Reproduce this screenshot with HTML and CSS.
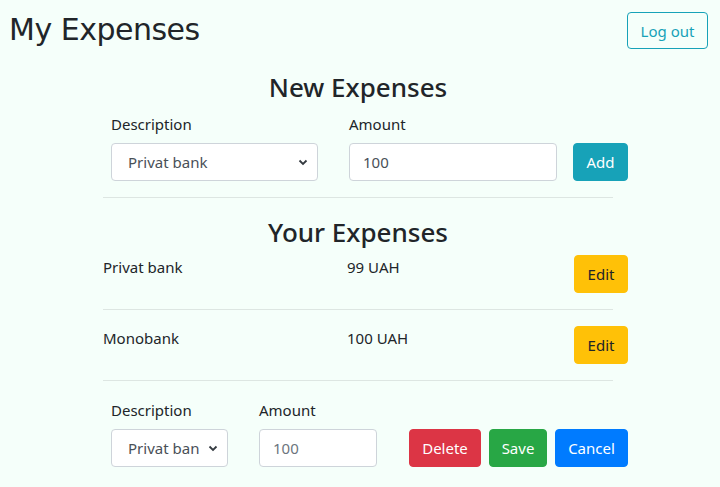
FILE: index.html
```html
<!DOCTYPE html>
<html>
<head>
<meta charset="utf-8">
<link rel="stylesheet" href="styles.css">
</head>
<body>
<header class="topbar">
  <h1 class="brand">My Expenses</h1>
  <button class="btn btn-outline-info">Log out</button>
</header>
<main class="content">
  <h3 class="section-title">New Expenses</h3>
  <form class="form-row new-form">
    <div class="field field-desc">
      <label>Description</label>
      <div class="select"><span>Privat bank</span><svg width="10" height="8" viewBox="0 0 10 8"><path d="M1.5 2.5 L5 6 L8.5 2.5" fill="none" stroke="#343a40" stroke-width="1.8"/></svg></div>
    </div>
    <div class="field field-amount">
      <label>Amount</label>
      <div class="input">100</div>
    </div>
    <button type="button" class="btn btn-info">Add</button>
  </form>
  <hr class="divider">
  <h3 class="section-title second">Your Expenses</h3>
  <div class="expense">
    <span class="exp-name">Privat bank</span>
    <span class="exp-amount">99 UAH</span>
    <button class="btn btn-warning">Edit</button>
  </div>
  <hr class="divider">
  <div class="expense">
    <span class="exp-name">Monobank</span>
    <span class="exp-amount">100 UAH</span>
    <button class="btn btn-warning">Edit</button>
  </div>
  <hr class="divider">
  <form class="form-row edit-form">
    <div class="field field-desc-sm">
      <label>Description</label>
      <div class="select"><span>Privat ban</span><svg width="10" height="8" viewBox="0 0 10 8"><path d="M1.5 2.5 L5 6 L8.5 2.5" fill="none" stroke="#343a40" stroke-width="1.8"/></svg></div>
    </div>
    <div class="field field-amount-sm">
      <label>Amount</label>
      <div class="input muted">100</div>
    </div>
    <div class="actions">
      <button type="button" class="btn btn-danger">Delete</button>
      <button type="button" class="btn btn-success">Save</button>
      <button type="button" class="btn btn-primary">Cancel</button>
    </div>
  </form>
</main>
</body>
</html>
```
FILE: styles.css
```css
* { box-sizing: border-box; }
html, body { margin: 0; padding: 0; }
body {
  background: #f5fffa;
  color: #212529;
  font-family: "Noto Sans", "Open Sans", sans-serif;
  font-size: 15px;
  line-height: 24px;
  width: 720px;
  height: 487px;
  overflow: hidden;
}
.topbar {
  display: flex;
  justify-content: space-between;
  align-items: flex-start;
  padding: 12px 12px 0 9px;
  height: 70px;
}
.brand {
  margin: 0;
  font-family: "Comic Sans MS", "DejaVu Sans", sans-serif;
  font-weight: 400;
  font-size: 30px;
  line-height: 36px;
  color: #212529;
  letter-spacing: -0.5px;
}
.btn {
  font-family: inherit;
  font-size: 15px;
  line-height: 24px;
  height: 38px;
  padding: 6px 12px;
  border-radius: 4px;
  border: 1px solid transparent;
  color: #fff;
  cursor: pointer;
}
.btn-outline-info { background: transparent; border-color: #17a2b8; color: #17a2b8; width: 81px; height: 37px; }
.btn-info { background: #17a2b8; border-color: #17a2b8; }
.btn-warning { background: #ffc107; border-color: #ffc107; color: #212529; }
.btn-danger { background: #dc3545; border-color: #dc3545; }
.btn-success { background: #28a745; border-color: #28a745; }
.btn-primary { background: #007bff; border-color: #007bff; }
.content {
  margin-left: 103px;
  width: 510px;
}
.section-title {
  margin: 0;
  text-align: center;
  font-size: 26px;
  font-weight: 500;
  line-height: 34px;
  color: #212529;
}
.form-row {
  display: flex;
  align-items: flex-end;
  width: 525px;
  padding-left: 8px;
}
.new-form { margin-top: 8px; }
.field { display: flex; flex-direction: column; }
.field label { line-height: 24px; margin-bottom: 7px; }
.field-desc { width: 207px; margin-right: 31px; }
.field-amount { width: 208px; margin-right: 16px; }
.new-form .btn { width: 55px; padding: 0; }
.select, .input {
  height: 38px;
  background: #fff;
  border: 1px solid #ced4da;
  border-radius: 4px;
  display: flex;
  align-items: center;
  color: #495057;
}
.select { justify-content: space-between; padding: 0 9px 0 16px; }
.input { padding: 0 13px; }
.input.muted { color: #6c757d; padding: 0 13px; }
.divider {
  border: 0;
  border-top: 1px solid #dde6e2;
  margin: 16px 0 16px 0;
  width: 510px;
}
.second { padding-top: 1px; }
.expense {
  display: flex;
  align-items: flex-start;
  width: 525px;
  margin-top: 6px;
}
.divider + .expense { margin-top: 0; }
.exp-name { width: 244px; }
.exp-amount { flex: 1; }
.expense .btn { width: 54px; padding: 0; }
.edit-form { padding-top: 1px; }
.field-desc-sm { width: 117px; margin-right: 31px; }
.field-amount-sm { width: 118px; margin-right: 32px; }
.actions { display: flex; gap: 8px; }
.btn-danger { width: 72px; padding: 0; }
.btn-success { width: 58px; padding: 0; }
.btn-primary { width: 73px; padding: 0; }
```
